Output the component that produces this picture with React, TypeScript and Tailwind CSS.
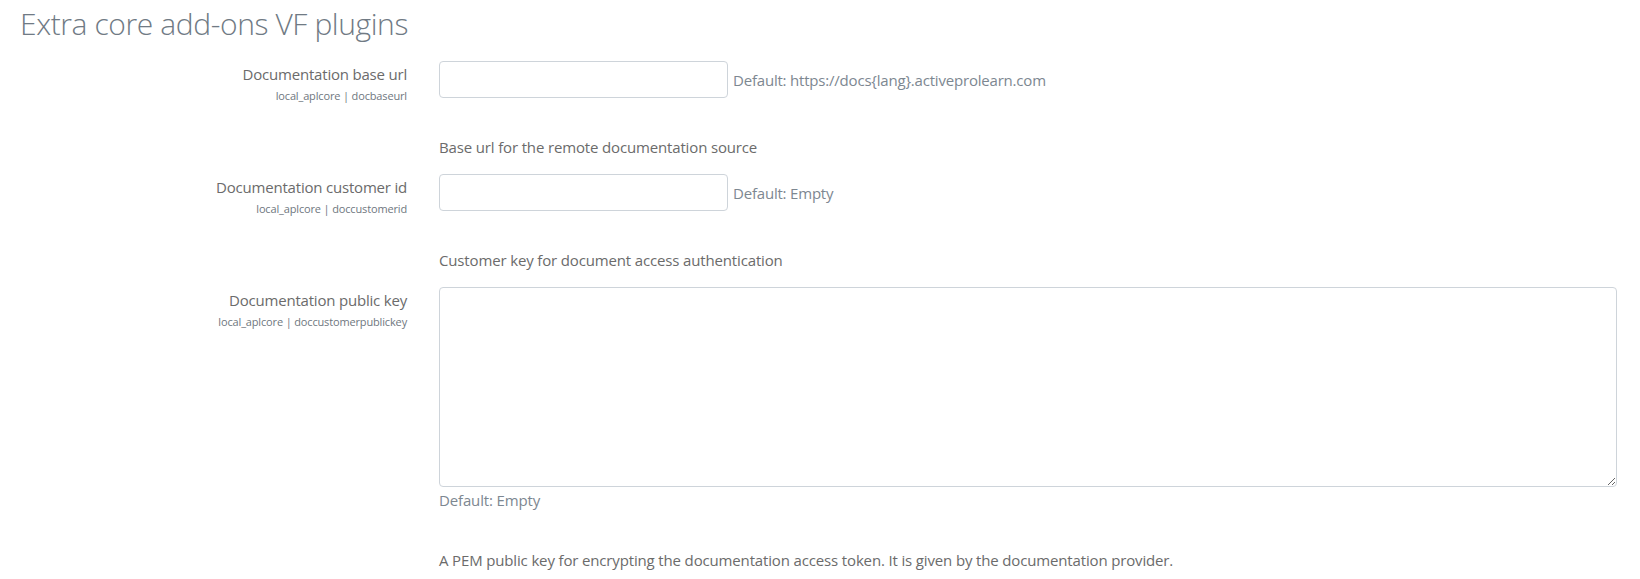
import React from "react";

// Una fila de ajuste: etiqueta a la izquierda, control y descripción a la derecha
interface SettingRowProps {
  label: string;
  name: string;
  defaultText: string;
  description: string;
  multiline?: boolean;
}

const SettingRow: React.FC<SettingRowProps> = ({ label, name, defaultText, description, multiline }) => {
  return (
    <div className="flex mb-[16px]">
      <div className="w-1/4 shrink-0 pr-[16px] text-right pt-[2px]">
        <div className="text-[15px] leading-[22px] tracking-[-0.2px] text-[#6b6b6b]">{label}</div>
        <div className="mt-[3px] text-[11px] leading-[16px] tracking-[-0.15px] text-[#6f7780]">{name}</div>
      </div>
      <div className="flex-1 pl-[16px] pr-[15px] tracking-[-0.15px]">
        {multiline ? (
          <>
            <textarea className="block w-full h-[200px] border border-[#ced4da] rounded-[4px] bg-white" />
            <div className="mt-[2px] text-[15px] leading-[22px] text-[#7d8791]">{defaultText}</div>
          </>
        ) : (
          <div className="flex items-center">
            <input type="text" className="w-[289px] h-[37px] border border-[#ced4da] rounded-[4px] bg-white" />
            <span className="ml-[5px] text-[15px] leading-[22px] tracking-[-0.2px] text-[#7d8791]">{defaultText}</span>
          </div>
        )}
        <p className="mt-[38px] text-[15px] leading-[22px] text-[#6b6b6b]">{description}</p>
      </div>
    </div>
  );
};

export default function App() {
  return (
    <div className="w-[1640px] h-[579px] bg-white overflow-hidden font-['Open_Sans',sans-serif]">
      <h2 className="pl-[20px] pt-[4px] text-[30px] leading-[40px] tracking-[-0.4px] font-light text-[#707a84]">
        Extra core add-ons VF plugins
      </h2>
      <div className="pl-[20px] pr-[8px] mt-[17px]">
        <SettingRow
          label="Documentation base url"
          name="local_aplcore | docbaseurl"
          defaultText="Default: https://docs{lang}.activeprolearn.com"
          description="Base url for the remote documentation source"
        />
        <SettingRow
          label="Documentation customer id"
          name="local_aplcore | doccustomerid"
          defaultText="Default: Empty"
          description="Customer key for document access authentication"
        />
        <SettingRow
          label="Documentation public key"
          name="local_aplcore | doccustomerpublickey"
          defaultText="Default: Empty"
          description="A PEM public key for encrypting the documentation access token. It is given by the documentation provider."
          multiline
        />
      </div>
    </div>
  );
}
